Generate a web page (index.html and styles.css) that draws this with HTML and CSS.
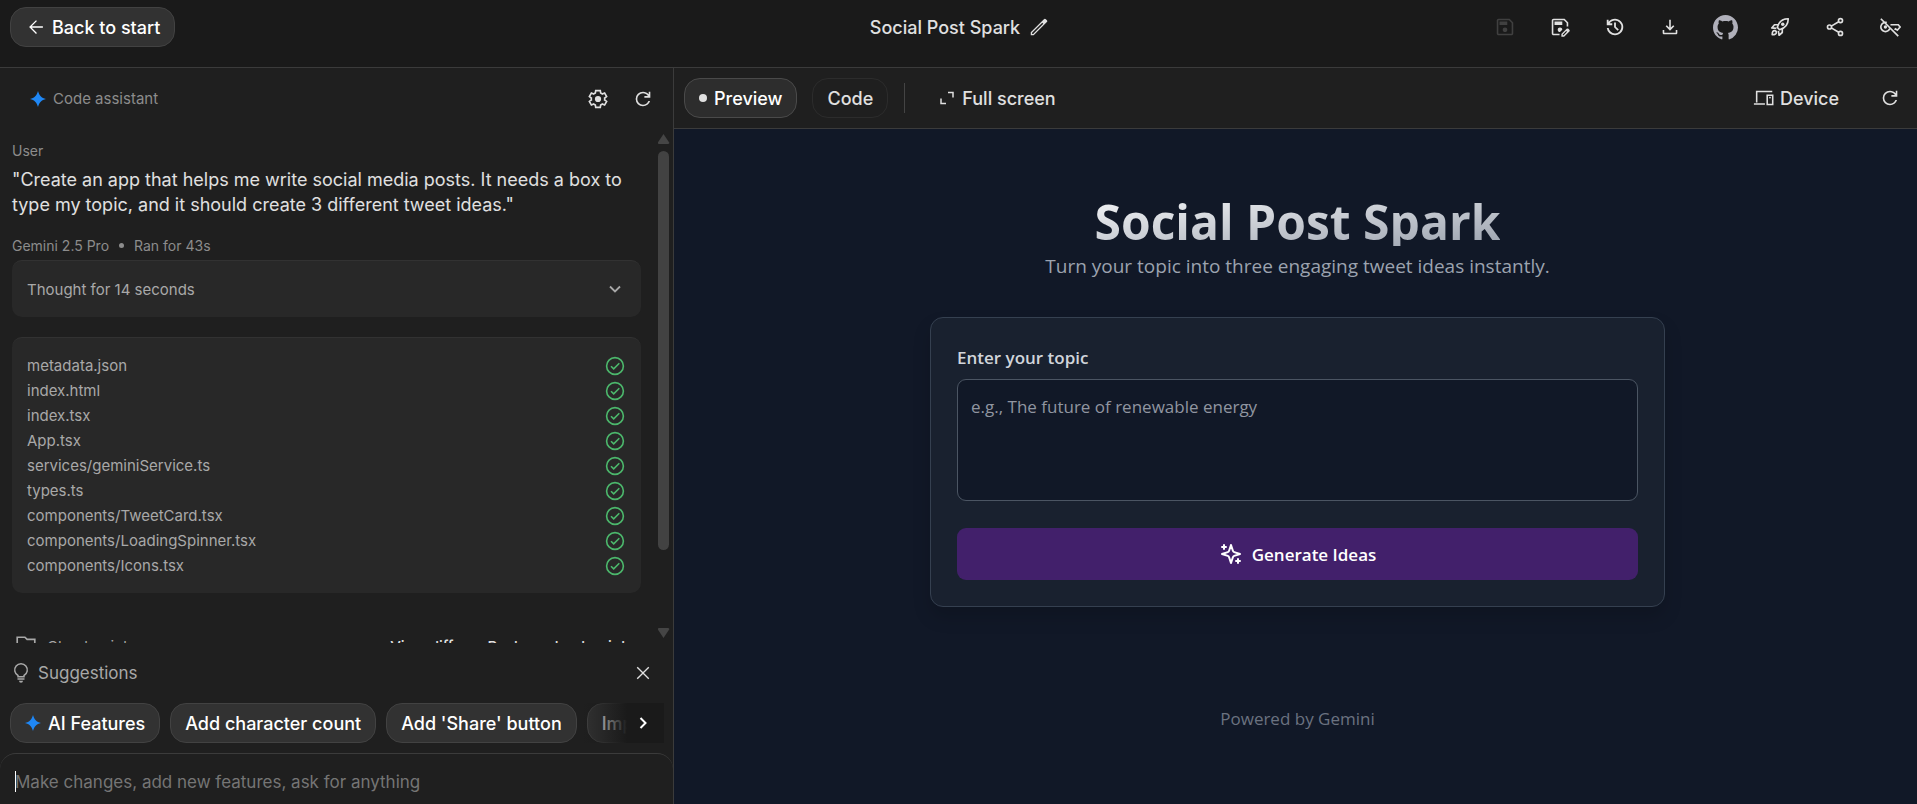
FILE: index.html
```html
<!DOCTYPE html>
<html lang="en">
<head>
    <meta charset="UTF-8">
    <meta name="viewport" content="width=device-width, initial-scale=1.0">
    <title>Social Post Spark</title>
    <link rel="stylesheet" href="styles.css">
</head>
<body>
    <!-- Icon sprite -->
    <svg class="sprite" aria-hidden="true">
        <symbol id="i-back" viewBox="0 -960 960 960"><path d="m294-450 227 227-41 43-300-300 300-300 41 43-227 227h486v60H294Z"/></symbol>
        <symbol id="i-edit" viewBox="0 -960 960 960"><path d="M180-180h44l443-443-44-44-443 443v44Zm-60 60v-128l575-574q8-8 19-12.5t23-4.5q11 0 22 4.5t20 12.5l44 44q9 9 13 20t4 22q0 11-4.5 22.5T823-694L248-120H120Z"/></symbol>
        <symbol id="i-save" viewBox="0 -960 960 960"><path d="M840-680v480q0 33-23.5 56.5T760-120H200q-33 0-56.5-23.5T120-200v-560q0-33 23.5-56.5T200-840h480l160 160Zm-70 27L652-770H190v580h580v-463ZM480-260q42 0 71-29t29-71q0-42-29-71t-71-29q-42 0-71 29t-29 71q0 42 29 71t71 29ZM240-570h340v-150H240v150Z"/></symbol>
        <symbol id="i-save-as" viewBox="0 -960 960 960"><path d="M200-120q-33 0-56.5-23.5T120-200v-560q0-33 23.5-56.5T200-840h480l160 160v180h-70v-153L652-770H190v580h270v70H200Zm40-450h340v-150H240v150Zm240 310 100-100q0-42-29-71t-71-29q-42 0-71 29t-29 71q0 42 29 71t71 29ZM540-60v-112l228-228q20-18 42-18t40 18l38 38q18 20 18 41t-18 41L660-60H540Zm62-58h34l150-150-36-36-148 148v38Z"/></symbol>
        <symbol id="i-history" viewBox="0 -960 960 960"><path d="M480-120q-138 0-240.5-91.5T122-440h82q14 104 92.5 172T480-200q117 0 198.5-81.5T760-480q0-117-81.5-198.5T480-760q-69 0-129 32t-101 88h110v80H120v-240h80v94q51-64 124.5-99T480-840q75 0 140.5 28.5t114 77q48.5 48.5 77 114T840-480q0 75-28.5 140.5t-77 114q-48.5 48.5-114 77T480-120Zm112-192L440-464v-216h80v184l128 128-56 56Z"/></symbol>
        <symbol id="i-download" viewBox="0 -960 960 960"><path d="M480-320 290-510l50-50 105 105v-345h70v345l105-105 50 50-190 190ZM220-160q-25 0-42.5-17.5T160-220v-130h70v120h500v-120h70v130q0 25-17.5 42.5T740-160H220Z"/></symbol>
        <symbol id="i-github" viewBox="0 0 16 16"><path d="M8 0C3.58 0 0 3.58 0 8c0 3.54 2.29 6.53 5.47 7.59.4.07.55-.17.55-.38 0-.19-.01-.82-.01-1.49-2.01.37-2.53-.49-2.69-.94-.09-.23-.48-.94-.82-1.13-.28-.15-.68-.52-.01-.53.63-.01 1.08.58 1.23.82.72 1.21 1.87.87 2.33.66.07-.52.28-.87.51-1.07-1.78-.2-3.64-.89-3.64-3.95 0-.87.31-1.59.82-2.15-.08-.2-.36-1.02.08-2.12 0 0 .67-.21 2.2.82.64-.18 1.32-.27 2-.27.68 0 1.36.09 2 .27 1.53-1.04 2.2-.82 2.2-.82.44 1.1.16 1.92.08 2.12.51.56.82 1.27.82 2.15 0 3.07-1.87 3.75-3.65 3.95.29.25.54.73.54 1.48 0 1.07-.01 1.93-.01 2.2 0 .21.15.46.55.38A8.01 8.01 0 0 0 16 8c0-4.42-3.58-8-8-8z"/></symbol>
        <symbol id="i-rocket" viewBox="0 0 24 24"><g fill="none" stroke="currentColor" stroke-width="1.8" stroke-linejoin="round"><path d="M9 12.5C10.5 7 14.5 3 21 3c0 6.5-4 10.5-9.500 12z"/><path d="M10 9.500H6L3 13l5 .5M14.500 14v4L11 21l-.8-4.800"/><path d="M3.500 20.500c0-3 1-4.500 2.500-4.500s2 .8 2 2-1.500 2.500-4.500 2.500z"/></g><circle cx="15" cy="9" r="1.900"/></symbol>
        <symbol id="i-share" viewBox="0 0 24 24"><g fill="none" stroke="currentColor" stroke-width="1.8"><circle cx="18" cy="5" r="2.200"/><circle cx="6" cy="12" r="2.200"/><circle cx="18" cy="19" r="2.200"/><path d="m8 11 8-4.800M8 13l8 4.800"/></g></symbol>
        <symbol id="i-key-off" viewBox="0 0 24 24"><g fill="none" stroke="currentColor" stroke-width="1.8"><path d="M2 3l19 19M12 12.500A5 5 0 1 1 8.500 7.200M12.500 9.500H21l2 2.500-3 3.500-2-1.500-1 1"/></g><circle cx="7" cy="12" r="1.800"/></symbol>
        <symbol id="i-spark" viewBox="0 0 24 24"><path d="M12 0c1.800 6.800 5.200 10.200 12 12-6.800 1.800-10.200 5.200-12 12-1.800-6.800-5.200-10.200-12-12 6.800-1.800 10.200-5.200 12-12z"/></symbol>
        <symbol id="i-gear" viewBox="0 0 24 24"><path fill="none" stroke="currentColor" stroke-width="1.8" d="M19.200 13c.1-.3.1-.6.100-1s0-.7-.1-1l2.200-1.600-2.200-4-2.600 1.100c-.5-.4-1.100-.7-1.700-1L14.500 2.800h-5L9.100 5.500c-.6.300-1.200.6-1.700 1L4.800 5.400l-2.200 4L4.800 11c-.1.300-.1.600-.1 1s0 .7.100 1l-2.200 1.600 2.200 4 2.600-1.100c.5.4 1.100.7 1.700 1l.4 2.700h5l.4-2.700c.6-.3 1.200-.6 1.700-1l2.600 1.100 2.200-4z"/><circle cx="12" cy="12" r="3.400"/></symbol>
        <symbol id="i-refresh" viewBox="0 -960 960 960"><path d="M480-160q-134 0-227-93t-93-227q0-134 93-227t227-93q75 0 139 31.500T730-682v-118h70v260H540v-70h152q-34-56-90-88t-122-32q-104 0-177 73t-73 177q0 104 73 177t177 73q79 0 143-45t92-119h74q-30 106-115 170t-194 64Z"/></symbol>
        <symbol id="i-chevron" viewBox="0 0 16 16"><path fill="none" stroke="currentColor" stroke-width="1.8" d="m3 5.500 5 5 5-5"/></symbol>
        <symbol id="i-next" viewBox="0 0 16 16"><path fill="none" stroke="currentColor" stroke-width="2" d="m5.500 3 5 5-5 5"/></symbol>
        <symbol id="i-check" viewBox="0 0 20 20"><g fill="none" stroke="currentColor" stroke-width="1.6"><circle cx="10" cy="10" r="8.400"/><path d="m6 10.200 2.700 2.700 5.600-5.600"/></g></symbol>
        <symbol id="i-bulb" viewBox="0 0 20 22"><g fill="none" stroke="currentColor" stroke-width="1.5"><path d="M7 14.700v-1.200a6.300 6.300 0 1 1 6 0v1.200zM6.500 17h7"/></g><path d="M8 18.800h4a2 2 0 0 1-4 0z"/></symbol>
        <symbol id="i-close" viewBox="0 -960 960 960"><path d="m249-207-42-42 231-231-231-231 42-42 231 231 231-231 42 42-231 231 231 231-42 42-231-231-231 231Z"/></symbol>
        <symbol id="i-files" viewBox="0 0 20 20"><path fill="none" stroke="currentColor" stroke-width="1.5" d="M2 14V2h7l2 2h7v13H5"/></symbol>
        <symbol id="i-expand" viewBox="0 0 16 16"><path fill="none" stroke="currentColor" stroke-width="1.5" d="M9 2.500h5v5M2 8.500v5h5"/></symbol>
        <symbol id="i-device" viewBox="0 0 24 24"><g fill="none" stroke="currentColor" stroke-width="1.7"><path d="M21 5H4v12M1 18.500h12"/><path d="M15.500 9h6v10h-6z"/></g><circle cx="18.500" cy="11.500" r="1"/></symbol>
        <symbol id="i-sparkles" viewBox="0 0 24 24"><path fill="none" stroke="currentColor" stroke-width="2" stroke-linecap="round" stroke-linejoin="round" d="m12 3-1.900 5.800a2 2 0 0 1-1.300 1.300L3 12l5.800 1.900a2 2 0 0 1 1.300 1.300L12 21l1.900-5.800a2 2 0 0 1 1.300-1.300L21 12l-5.800-1.900a2 2 0 0 1-1.300-1.300L12 3ZM5 3v4M3 5h4M19 17v4M17 19h4"/></symbol>
    </svg>

    <header class="header">
        <a href="#" class="btn btn-filled"><svg class="icon"><use href="#i-back"/></svg>Back to start</a>
        <div class="app-title">
            <h1>Social Post Spark</h1>
            <button class="title-edit" aria-label="Rename app"><svg class="icon"><use href="#i-edit"/></svg></button>
        </div>
        <nav class="header-actions">
            <button class="icon-btn" aria-label="Save" disabled><svg class="icon"><use href="#i-save"/></svg></button>
            <button class="icon-btn" aria-label="Save as"><svg class="icon"><use href="#i-save-as"/></svg></button>
            <button class="icon-btn" aria-label="History"><svg class="icon"><use href="#i-history"/></svg></button>
            <button class="icon-btn" aria-label="Download"><svg class="icon"><use href="#i-download"/></svg></button>
            <button class="icon-btn github" aria-label="GitHub"><svg class="icon"><use href="#i-github"/></svg></button>
            <button class="icon-btn" aria-label="Deploy"><svg class="icon"><use href="#i-rocket"/></svg></button>
            <button class="icon-btn" aria-label="Share"><svg class="icon"><use href="#i-share"/></svg></button>
            <button class="icon-btn" aria-label="API key"><svg class="icon"><use href="#i-key-off"/></svg></button>
        </nav>
    </header>

    <div class="workspace">
        <aside class="assistant">
            <div class="assistant-head">
                <h2 class="assistant-name"><svg class="spark"><use href="#i-spark"/></svg>Code assistant</h2>
                <button class="icon-btn" aria-label="Settings"><svg class="icon"><use href="#i-gear"/></svg></button>
                <button class="icon-btn" aria-label="Reset"><svg class="icon"><use href="#i-refresh"/></svg></button>
            </div>

            <div class="chat">
                <div class="chat-content">
                    <div class="meta">User</div>
                    <p class="prompt">"Create an app that helps me write social media posts. It needs a box to type my topic, and it should create 3 different tweet ideas."</p>
                    <div class="meta run-info"><span>Gemini 2.5 Pro</span><span class="dot"></span><span>Ran for 43s</span></div>
                    <button class="panel thought">Thought for 14 seconds<svg class="chevron"><use href="#i-chevron"/></svg></button>
                    <ul class="panel files">
                        <li>metadata.json<svg class="check"><use href="#i-check"/></svg></li>
                        <li>index.html<svg class="check"><use href="#i-check"/></svg></li>
                        <li>index.tsx<svg class="check"><use href="#i-check"/></svg></li>
                        <li>App.tsx<svg class="check"><use href="#i-check"/></svg></li>
                        <li>services/geminiService.ts<svg class="check"><use href="#i-check"/></svg></li>
                        <li>types.ts<svg class="check"><use href="#i-check"/></svg></li>
                        <li>components/TweetCard.tsx<svg class="check"><use href="#i-check"/></svg></li>
                        <li>components/LoadingSpinner.tsx<svg class="check"><use href="#i-check"/></svg></li>
                        <li>components/Icons.tsx<svg class="check"><use href="#i-check"/></svg></li>
                    </ul>
                    <div class="checkpoint">
                        <svg class="icon"><use href="#i-files"/></svg>
                        <span class="checkpoint-name">Checkpoint</span>
                        <button>View diff</button>
                        <button>Restore checkpoint</button>
                    </div>
                </div>
                <div class="scrollbar" aria-hidden="true">
                    <span class="arrow arrow-up"></span>
                    <div class="track"><div class="thumb"></div></div>
                    <span class="arrow arrow-down"></span>
                </div>
            </div>

            <div class="suggestions-head">
                <svg class="bulb"><use href="#i-bulb"/></svg>
                <h3>Suggestions</h3>
                <button class="icon-btn" aria-label="Close suggestions"><svg class="icon"><use href="#i-close"/></svg></button>
            </div>
            <div class="chips">
                <button class="btn btn-filled"><svg class="spark"><use href="#i-spark"/></svg>AI Features</button>
                <button class="btn btn-filled">Add character count</button>
                <button class="btn btn-filled">Add 'Share' button</button>
                <button class="btn btn-filled">Improve styling</button>
                <button class="chips-next" aria-label="Next suggestions"><svg class="chevron"><use href="#i-next"/></svg></button>
            </div>
            <div class="composer">
                <input type="text" aria-label="Prompt" placeholder="Make changes, add new features, ask for anything">
            </div>
        </aside>

        <main class="stage">
            <div class="toolbar">
                <button class="btn btn-active"><span class="status"></span>Preview</button>
                <button class="btn btn-outline">Code</button>
                <span class="divider"></span>
                <button class="btn btn-plain"><svg class="expand"><use href="#i-expand"/></svg>Full screen</button>
                <button class="btn btn-plain device"><svg class="icon"><use href="#i-device"/></svg>Device</button>
                <button class="icon-btn" aria-label="Reload preview"><svg class="icon"><use href="#i-refresh"/></svg></button>
            </div>
            <div class="preview">
                <h2 class="hero-title">Social Post Spark</h2>
                <p class="hero-sub">Turn your topic into three engaging tweet ideas instantly.</p>
                <form class="card">
                    <label for="topic">Enter your topic</label>
                    <textarea id="topic" placeholder="e.g., The future of renewable energy"></textarea>
                    <button type="button" class="generate"><svg class="sparkles"><use href="#i-sparkles"/></svg>Generate Ideas</button>
                </form>
                <footer class="powered">Powered by Gemini</footer>
            </div>
        </main>
    </div>
</body>
</html>
```

FILE: styles.css
```css
:root {
    --header-bg: #1a1a1a;
    --panel-bg: #1f1f1f;
    --card-bg: #282828;
    --line: #3b3b3b;
    --text: #e0e0e0;
    --text-muted: #a8a8a8;
    --text-dim: #8c8c8c;
    --blue: #1f87f5;
    --green: #4cb86c;
}

* {
    margin: 0;
    padding: 0;
    box-sizing: border-box;
}

body {
    display: flex;
    flex-direction: column;
    height: 100vh;
    overflow: hidden;
    background: var(--panel-bg);
    color: var(--text);
    font-family: Inter, sans-serif;
    font-size: 17px;
    line-height: 25px;
}

button,
input,
textarea {
    font: inherit;
    color: inherit;
    background: none;
    border: none;
}

button {
    cursor: pointer;
}

svg {
    display: block;
    flex: none;
    fill: currentColor;
}

.sprite {
    position: absolute;
    width: 0;
    height: 0;
}

.icon {
    width: 22px;
    height: 22px;
}

.spark {
    width: 16px;
    height: 16px;
    color: var(--blue);
}

.btn {
    display: flex;
    align-items: center;
    gap: 7px;
    height: 40px;
    padding: 0 14px;
    border: 1px solid transparent;
    border-radius: 16px;
    font-size: 18px;
    font-weight: 500;
    color: var(--text);
    text-decoration: none;
    white-space: nowrap;
}

.btn-filled {
    background: #323232;
    border-color: #424242;
    color: #ffffff;
}

.btn-active {
    background: #2d2d2d;
    border-color: #4a4a4a;
    color: #ffffff;
}

.btn-outline {
    border-color: #2c2c2c;
}

.icon-btn {
    display: flex;
    align-items: center;
    justify-content: center;
    width: 40px;
    height: 40px;
    flex: none;
}

.icon-btn:disabled {
    color: #404040;
}

/* Header */
.header {
    display: grid;
    grid-template-columns: 1fr auto 1fr;
    align-items: start;
    height: 68px;
    padding: 7px 7px 0 10px;
    background: var(--header-bg);
    border-bottom: 1px solid var(--line);
    flex: none;
}

.header .btn {
    justify-self: start;
    gap: 5px;
}

.app-title {
    display: flex;
    align-items: center;
    gap: 8px;
    height: 40px;
}

.app-title h1 {
    font-size: 18px;
    font-weight: 500;
}

.header-actions {
    display: flex;
    justify-content: flex-end;
    gap: 15px;
}

.github {
    color: #b0b0ba;
}

.github .icon {
    width: 25px;
    height: 25px;
}

.workspace {
    display: flex;
    flex: 1;
    min-height: 0;
}

/* Assistant */
.assistant {
    display: flex;
    flex-direction: column;
    width: 674px;
    flex: none;
    border-right: 1px solid var(--line);
}

.assistant-head {
    display: flex;
    align-items: center;
    gap: 5px;
    height: 61px;
    padding: 0 10px 0 30px;
    flex: none;
}

.assistant-name {
    display: flex;
    align-items: center;
    gap: 7px;
    flex: 1;
    font-size: 15px;
    font-weight: 400;
    color: var(--text-dim);
}

.chat {
    display: flex;
    flex: 1;
    min-height: 0;
    overflow: hidden;
}

.chat-content {
    flex: 1;
    padding: 9px 17px 0 12px;
}

.meta {
    font-size: 14px;
    color: var(--text-dim);
}

.prompt {
    margin-top: 4px;
    font-size: 18px;
}

.run-info {
    display: flex;
    align-items: center;
    gap: 10px;
    margin: 16px 0 2px;
}

.dot {
    width: 5px;
    height: 5px;
    border-radius: 50%;
    background: var(--text-dim);
}

.panel {
    width: 100%;
    padding: 15px;
    background: var(--card-bg);
    border-top: 1px solid #323232;
    border-radius: 10px;
    font-size: 15px;
    color: var(--text-muted);
}

.thought {
    display: flex;
    align-items: center;
    justify-content: space-between;
    height: 57px;
    padding-right: 18px;
}

.chevron {
    width: 16px;
    height: 16px;
}

.files {
    margin-top: 20px;
    list-style: none;
}

.files li {
    display: flex;
    align-items: center;
    justify-content: space-between;
}

.check {
    width: 22px;
    height: 20px;
    color: var(--green);
}

.checkpoint {
    display: flex;
    align-items: center;
    gap: 34px;
    height: 40px;
    margin-top: 33px;
    padding: 0 15px 0 3px;
    font-size: 15px;
}

.checkpoint .icon {
    color: var(--text-muted);
}

.checkpoint-name {
    flex: 1;
    margin-left: -24px;
    color: var(--text-muted);
}

.checkpoint button {
    font-weight: 500;
}

.scrollbar {
    display: flex;
    flex-direction: column;
    align-items: center;
    width: 11px;
    margin: 5px 4px 5px 0;
}

.arrow {
    width: 12px;
    height: 10px;
    background: #454545;
}

.arrow-up {
    clip-path: polygon(50% 0, 100% 90%, 90% 100%, 10% 100%, 0 90%);
}

.arrow-down {
    clip-path: polygon(50% 100%, 100% 10%, 90% 0, 10% 0, 0 10%);
}

.track {
    flex: 1;
    width: 100%;
    margin: 7px 0 8px;
}

.thumb {
    height: 85%;
    border-radius: 6px;
    background: #424242;
}

/* Suggestions */
.suggestions-head {
    display: flex;
    align-items: center;
    height: 60px;
    padding: 0 10px 0 11px;
    flex: none;
    color: var(--text-muted);
}

.bulb {
    width: 20px;
    height: 22px;
}

.suggestions-head h3 {
    flex: 1;
    margin-left: 7px;
    font-size: 17px;
    font-weight: 400;
}

.suggestions-head .icon-btn {
    color: var(--text);
}

.chips {
    position: relative;
    display: flex;
    gap: 10px;
    margin: 0 9px 10px 10px;
    overflow: hidden;
    flex: none;
}

.chips .btn {
    flex: none;
}

.chips-next {
    position: absolute;
    right: 0;
    top: 0;
    display: flex;
    align-items: center;
    justify-content: flex-end;
    width: 82px;
    height: 40px;
    padding-right: 13px;
    background: linear-gradient(to right, transparent, #1a1a1a 55%);
    color: #ffffff;
}

.composer {
    position: relative;
    height: 51px;
    padding: 16px 15px;
    border-top: 1px solid var(--line);
    border-radius: 16px 16px 0 0;
    flex: none;
}

/* Text cursor */
.composer::before {
    content: "";
    position: absolute;
    left: 15px;
    top: 17px;
    width: 1px;
    height: 21px;
    background: #ffffff;
}

.composer input {
    display: block;
    width: 100%;
    height: 25px;
    outline: none;
}

.composer input::placeholder {
    color: #757575;
}

/* Preview */
.stage {
    display: flex;
    flex-direction: column;
    flex: 1;
    min-width: 0;
}

.toolbar {
    display: flex;
    align-items: center;
    height: 61px;
    padding: 0 7px 0 10px;
    border-bottom: 1px solid var(--line);
    flex: none;
}

.btn-outline {
    margin-left: 15px;
}

.status {
    width: 8px;
    height: 8px;
    border-radius: 50%;
    background: var(--text);
}

.divider {
    width: 1px;
    height: 30px;
    margin: 0 19px 0 16px;
    background: #444444;
}

.expand {
    width: 16px;
    height: 16px;
}

.device {
    margin-left: auto;
    margin-right: 16px;
    gap: 5px;
}

.preview {
    display: flex;
    flex-direction: column;
    align-items: center;
    flex: 1;
    padding: 69px 36px 0 40px;
    background: #111827;
    font-family: "Open Sans", sans-serif;
    font-size: 17px;
    line-height: 27px;
}

.hero-title {
    font-size: 48px;
    font-weight: 700;
    line-height: 48px;
    background: linear-gradient(to bottom right, #f3f4f6, #9ca3af);
    -webkit-background-clip: text;
    background-clip: text;
    color: transparent;
}

.hero-sub {
    margin-top: 7px;
    font-size: 19px;
    color: #9ca3af;
}

.card {
    display: flex;
    flex-direction: column;
    width: 100%;
    max-width: 735px;
    margin-top: 37px;
    padding: 26px;
    background: #19212f;
    border: 1px solid #354050;
    border-radius: 13px;
    box-shadow: 0 10px 18px rgba(0, 0, 0, 0.15);
}

.card label {
    font-weight: 600;
    color: #d1d5db;
}

.card textarea {
    height: 122px;
    margin: 8px 0 27px;
    padding: 13px;
    background: #111827;
    border: 1px solid #4b5563;
    border-radius: 9px;
    resize: none;
}

.card textarea::placeholder {
    color: #9095a0;
}

.generate {
    display: flex;
    align-items: center;
    justify-content: center;
    gap: 9px;
    height: 52px;
    background: #42206b;
    border-radius: 9px;
    font-weight: 600;
    color: #ffffff;
}

.sparkles {
    width: 24px;
    height: 24px;
}

.powered {
    margin-top: 98px;
    color: #6b7280;
}
```
